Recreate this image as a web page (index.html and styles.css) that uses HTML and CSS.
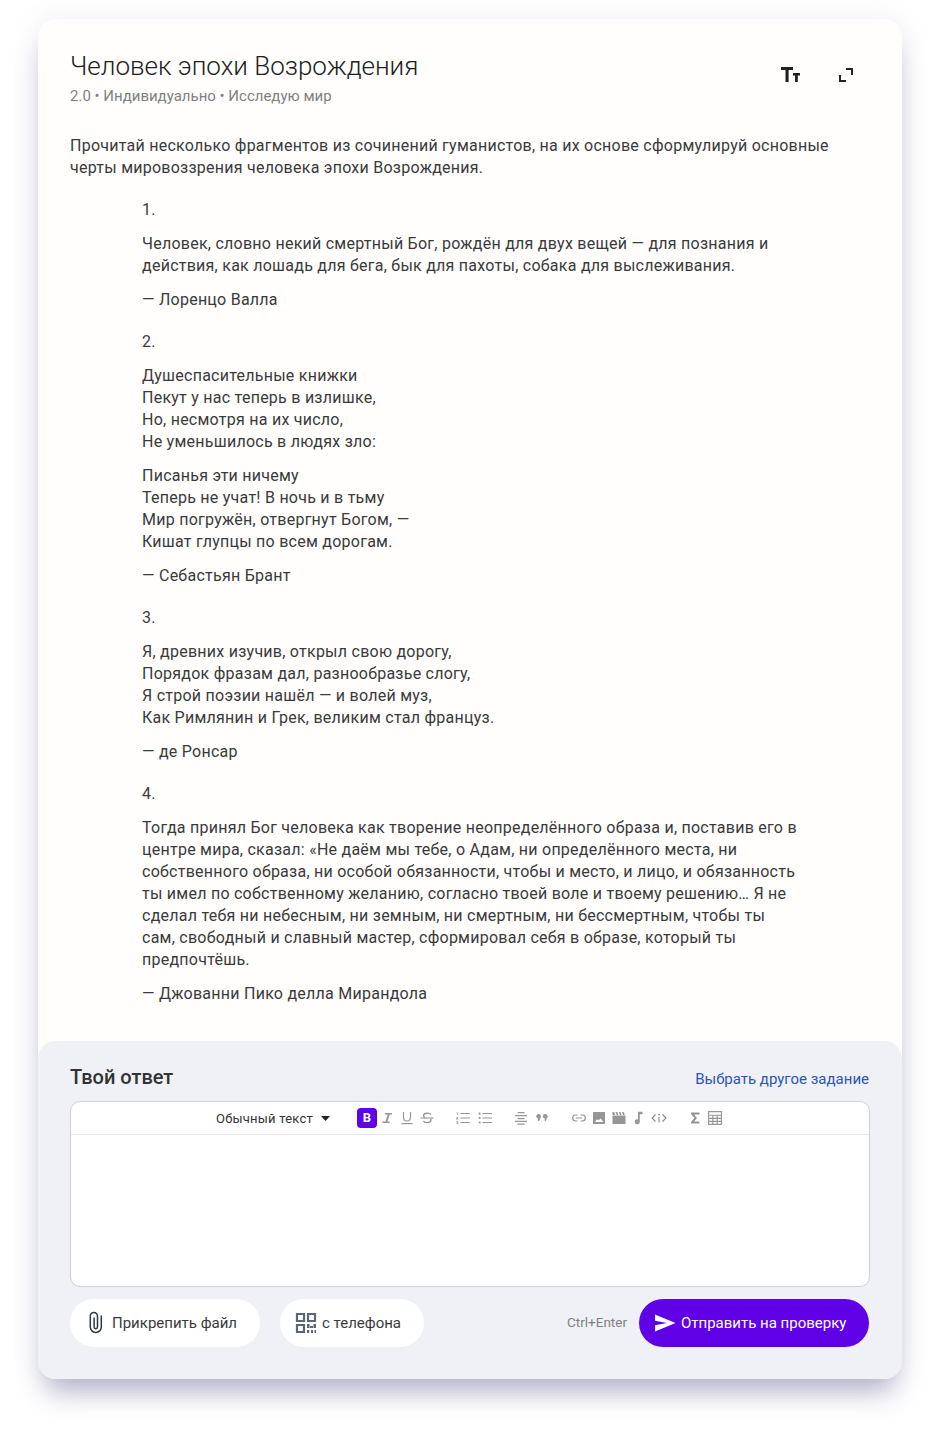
FILE: index.html
```html
<!DOCTYPE html>
<html lang="ru">

<head>
    <meta charset="UTF-8">
    <title>Человек эпохи Возрождения</title>
    <link rel="stylesheet" href="styles.css">
</head>

<body>
    <div class="card">
        <div class="task">
            <div class="task-head">
                <div>
                    <h1 class="task-title">Человек эпохи Возрождения</h1>
                    <div class="task-meta">2.0 • Индивидуально • Исследую мир</div>
                </div>
                <div class="task-tools">
                    <svg class="tool-icon" viewBox="0 0 24 24" width="24" height="24">
                        <path fill="#212121" d="M1 5h12v3H8.600v12H5.500V8H1zM13 11h7v2.500h-2.200V20H15v-6.500h-2z"/>
                    </svg>
                    <svg class="tool-icon" viewBox="0 0 24 24" width="24" height="24">
                        <path fill="none" stroke="#212121" stroke-width="2" d="M4 13v6h6M10 7h6v6"/>
                    </svg>
                </div>
            </div>

            <p class="intro">Прочитай несколько фрагментов из сочинений гуманистов, на их основе сформулируй основные черты мировоззрения человека эпохи Возрождения.</p>

            <div class="quote">
                <p>1.</p>
                <p>Человек, словно некий смертный Бог, рождён для двух вещей — для познания и действия, как лошадь для бега, бык для пахоты, собака для выслеживания.</p>
                <p>— Лоренцо Валла</p>
            </div>

            <div class="quote">
                <p>2.</p>
                <p>Душеспасительные книжки<br>Пекут у нас теперь в излишке,<br>Но, несмотря на их число,<br>Не уменьшилось в людях зло:</p>
                <p>Писанья эти ничему<br>Теперь не учат! В ночь и в тьму<br>Мир погружён, отвергнут Богом, —<br>Кишат глупцы по всем дорогам.</p>
                <p>— Себастьян Брант</p>
            </div>

            <div class="quote">
                <p>3.</p>
                <p>Я, древних изучив, открыл свою дорогу,<br>Порядок фразам дал, разнообразье слогу,<br>Я строй поэзии нашёл — и волей муз,<br>Как Римлянин и Грек, великим стал француз.</p>
                <p>— де Ронсар</p>
            </div>

            <div class="quote">
                <p>4.</p>
                <p>Тогда принял Бог человека как творение неопределённого образа и, поставив его в центре мира, сказал: «Не даём мы тебе, о Адам, ни определённого места, ни собственного образа, ни особой обязанности, чтобы и место, и лицо, и обязанность ты имел по собственному желанию, согласно твоей воле и твоему решению… Я не сделал тебя ни небесным, ни земным, ни смертным, ни бессмертным, чтобы ты сам, свободный и славный мастер, сформировал себя в образе, который ты предпочтёшь.</p>
                <p>— Джованни Пико делла Мирандола</p>
            </div>
        </div>

        <div class="answer">
            <div class="answer-head">
                <h2 class="answer-title">Твой ответ</h2>
                <a class="answer-link" href="#">Выбрать другое задание</a>
            </div>

            <div class="editor">
                <div class="toolbar">
                    <span class="format">Обычный текст</span>
                    <svg class="caret" viewBox="0 0 9 5" width="9" height="5"><path fill="#212121" d="M0 0h9L4.500 5z"/></svg>

                    <div class="tool-group group-text">
                        <span class="bold-btn">B</span>
                        <svg class="ed-icon" viewBox="0 0 14 14" width="14" height="14"><path fill="#969696" d="M5 2h7v1.600H9.800L7.400 10.400H9.500V12H2.500v-1.600h2.900L7.800 3.600H5z"/></svg>
                        <svg class="ed-icon" viewBox="0 0 14 14" width="14" height="14"><path fill="none" stroke="#969696" stroke-width="1.200" d="M3.500 1v5.500a3.500 3.500 0 0 0 7 0V1"/><path fill="#969696" d="M1.500 12h11v1.200h-11z"/></svg>
                        <svg class="ed-icon" viewBox="0 0 14 14" width="14" height="14"><path fill="none" stroke="#969696" stroke-width="1.300" d="M11 3.500C10 1.800 3.500 1.500 3.500 4.500c0 1 .6 1.800 1.600 2.300M3.500 10c1 2.300 7.500 2.200 7.500-1 0-.5-.1-1-.4-1.400"/><path fill="#969696" d="M.5 6.500h13v1.100H.5z"/></svg>
                    </div>

                    <div class="tool-group group-list">
                        <svg class="ed-icon" viewBox="0 0 16 14" width="16" height="14"><path fill="#969696" d="M5.500 2h9.500v1.100H5.500zM5.500 6.500h9.500v1.100H5.500zM5.500 11h9.500v1.100H5.500zM1.500 1.500h1.300V4H2V2.200h-.5zM1.300 6h1.900v.7L2.300 7.800h.9v.6H1.200v-.6l1.100-1.200h-1zM1.300 10.300h1.900V13H1.300v-.6h1.100v-.4h-.7v-.5h.7v-.6H1.300z"/></svg>
                        <svg class="ed-icon" viewBox="0 0 16 14" width="16" height="14"><path fill="#969696" d="M5.500 2h9.500v1.100H5.500zM5.500 6.500h9.500v1.100H5.500zM5.500 11h9.500v1.100H5.500z"/><circle cx="2.600" cy="2.600" r="1.100" fill="#969696"/><circle cx="2.600" cy="7" r="1.100" fill="#969696"/><circle cx="2.600" cy="11.500" r="1.100" fill="#969696"/></svg>
                    </div>

                    <div class="tool-group group-block">
                        <svg class="ed-icon" viewBox="0 0 14 14" width="14" height="14"><path fill="#969696" d="M3.500 1h7v1.200h-7zM1 4h12v1.200H1zM3.500 7h7v1.200h-7zM1 9.800h12V11H1zM3.500 12.500h7v1.200h-7z"/></svg>
                        <svg class="ed-icon" viewBox="0 0 14 14" width="14" height="14"><circle cx="3.600" cy="5.200" r="2.300" fill="#969696"/><circle cx="10.200" cy="5.200" r="2.300" fill="#969696"/><path fill="#969696" d="M3.400 5h2.500L4.200 10H3zM10 5h2.500L10.800 10H9.600z"/></svg>
                    </div>

                    <div class="tool-group group-media">
                        <svg class="ed-icon" viewBox="0 0 16 14" width="16" height="14"><path fill="none" stroke="#969696" stroke-width="1.200" d="M6.500 4H4.700a3 3 0 0 0 0 6h1.800M9.500 4h1.800a3 3 0 0 1 0 6H9.500M5 7h6"/></svg>
                        <svg class="ed-icon" viewBox="0 0 14 14" width="14" height="14"><path fill="#969696" fill-rule="evenodd" d="M1 1h12v12H1zM3 11h8.500L8.500 7.500 6.500 9.500 5 8.200z"/></svg>
                        <svg class="ed-icon" viewBox="0 0 14 14" width="14" height="14"><path fill="#969696" d="M.5 4.500h13V13H.5zM.5 1h1.700l1 3H.5zM3.600 1h1.700l1 3H4.600zM6.800 1h1.700l1 3H7.800zM10 1h1.700l1 3H11z"/></svg>
                        <svg class="ed-icon" viewBox="0 0 14 14" width="14" height="14"><path fill="#969696" d="M7 .8h4.500v2.400H8.800V10.800A2.500 2.500 0 1 1 7 8.400z"/></svg>
                        <svg class="ed-icon" viewBox="0 0 16 14" width="16" height="14"><path fill="none" stroke="#888" stroke-width="1.100" d="M4.500 3.500 1 7l3.500 3.500M11.500 3.500 15 7l-3.500 3.500M8 6v5.500"/><circle cx="8" cy="3.600" r=".9" fill="#888"/></svg>
                    </div>

                    <div class="tool-group group-math">
                        <svg class="ed-icon" viewBox="0 0 14 14" width="14" height="14"><path fill="#969696" d="M3 1.500h8.500v2H6.200L9 7l-2.800 3.500h5.300v2H3v-1.400L6.400 7 3 2.900z"/></svg>
                        <svg class="ed-icon" viewBox="0 0 14 14" width="14" height="14"><path fill="none" stroke="#969696" stroke-width="1.100" d="M.6.600h12.800v12.800H.6zM.6 4.200h12.800M.6 7.400h12.800M.6 10.400h12.800M4.800 4.200v9.200M9.200 4.200v9.200"/></svg>
                    </div>
                </div>
                <div class="editor-body"></div>
            </div>

            <div class="actions">
                <a class="pill attach" href="#">
                    <svg viewBox="0 0 24 24" width="24" height="24"><path fill="none" stroke="#2f3742" stroke-width="1.500" stroke-linecap="round" d="M17.300 5v11a5.500 5.500 0 0 1-11 0V5.100a3.600 3.600 0 0 1 7.200 0V16a1.700 1.700 0 0 1-3.400 0V7"/></svg>
                    Прикрепить файл
                </a>
                <a class="pill phone" href="#">
                    <svg viewBox="0 0 22 22" width="22" height="22"><path fill="none" stroke="#5a6675" stroke-width="2.200" d="M2 2h7v7H2zM13 2h7v7h-7zM2 13h7v7H2z"/><path fill="#5a6675" d="M12 12h2.500v4H12zM15 14h3v2h-3zM18.500 12H21v4h-2.500zM12 18h2.200v3H12zM16 18h2v3h-2zM19.500 18H21v3h-1.500z"/></svg>
                    с телефона
                </a>
                <span class="hotkey">Ctrl+Enter</span>
                <a class="pill send" href="#">
                    <svg viewBox="0 0 24 24" width="24" height="24"><path fill="#fff" d="M2 3.500 22.500 12 2 20.500v-6.300L14 12 2 9.800z"/></svg>
                    Отправить на проверку
                </a>
            </div>
        </div>
    </div>
</body>

</html>
```

FILE: styles.css
```css
body {
    margin: 0;
    padding: 19px 38px 57px;
    background: #fff;
    font-family: Roboto, "Liberation Sans", sans-serif;
    font-size: 16px;
    line-height: 22px;
    color: #3a3a3a;
}

.card {
    background: #fffefd;
    border-radius: 18px;
    box-shadow: 0 20px 28px -8px rgba(70, 65, 120, 0.4), 0 0 28px rgba(120, 120, 160, 0.1);
}

.task {
    padding: 29px 32px 16px;
}

.task-head {
    display: flex;
    justify-content: space-between;
    margin-bottom: 27px;
}

.task-title {
    margin: 0;
    font-size: 26px;
    line-height: 36px;
    font-weight: 300;
    color: #212121;
}

.task-meta {
    font-size: 15px;
    line-height: 24px;
    color: #808080;
}

.task-tools {
    display: flex;
    gap: 32px;
    padding: 14px 10px 0 0;
}

.tool-icon {
    display: block;
}

.intro {
    margin: 0 0 20px;
    letter-spacing: 0.25px;
}

.quote {
    margin: 0 72px 20px;
    letter-spacing: 0.25px;
}

.quote p {
    margin: 0 0 12px;
}

.answer {
    background: #f0f1f6;
    border-radius: 18px;
    padding: 20px 32px 32px;
}

.answer-head {
    display: flex;
    justify-content: space-between;
    align-items: center;
    height: 32px;
    margin-bottom: 8px;
}

.answer-title {
    margin: 0;
    font-size: 20px;
    font-weight: 500;
    color: #333;
}

.answer-link {
    margin-top: 3px;
    padding-right: 1px;
    font-size: 15px;
    color: #2b55b8;
    text-decoration: none;
}

.editor {
    background: #fff;
    border: 1px solid #cfd0d6;
    border-radius: 10px;
}

.toolbar {
    display: flex;
    align-items: center;
    height: 32px;
    padding-left: 145px;
    border-bottom: 1px solid #e8e8ea;
}

.format {
    padding-top: 1px;
    font-size: 13px;
    letter-spacing: 0.2px;
    color: #333;
}

.caret {
    margin-left: 8px;
}

.tool-group {
    display: flex;
    align-items: center;
    gap: 6px;
}

.group-text {
    margin-left: 27px;
}

.group-text .bold-btn {
    margin-right: -3px;
}

.group-list {
    margin-left: 21px;
}

.group-block {
    margin-left: 21px;
    gap: 7px;
}

.group-media {
    margin-left: 22px;
    gap: 5.5px;
}

.group-math {
    margin-left: 21px;
}

.bold-btn {
    width: 20px;
    height: 20px;
    border-radius: 4px;
    background: #5f00e6;
    color: #fff;
    font-size: 13px;
    line-height: 20px;
    font-weight: 700;
    text-align: center;
}

.ed-icon {
    display: block;
}

.editor-body {
    height: 151px;
}

.actions {
    display: flex;
    align-items: center;
    margin-top: 12px;
    padding-right: 1px;
}

.pill {
    display: flex;
    align-items: center;
    height: 48px;
    border-radius: 24px;
    background: #fff;
    font-size: 15px;
    color: #3a3a3a;
    text-decoration: none;
    box-sizing: border-box;
}

.attach {
    width: 190px;
    padding-left: 14px;
    gap: 4px;
}

.phone {
    width: 144px;
    margin-left: 20px;
    padding-left: 15px;
    gap: 5px;
}

.hotkey {
    margin-left: auto;
    padding-bottom: 2px;
    font-size: 13.5px;
    color: #808080;
}

.send {
    width: 230px;
    margin-left: 12px;
    padding-left: 14px;
    gap: 4px;
    background: #5f00e6;
    color: #fff;
}
```
